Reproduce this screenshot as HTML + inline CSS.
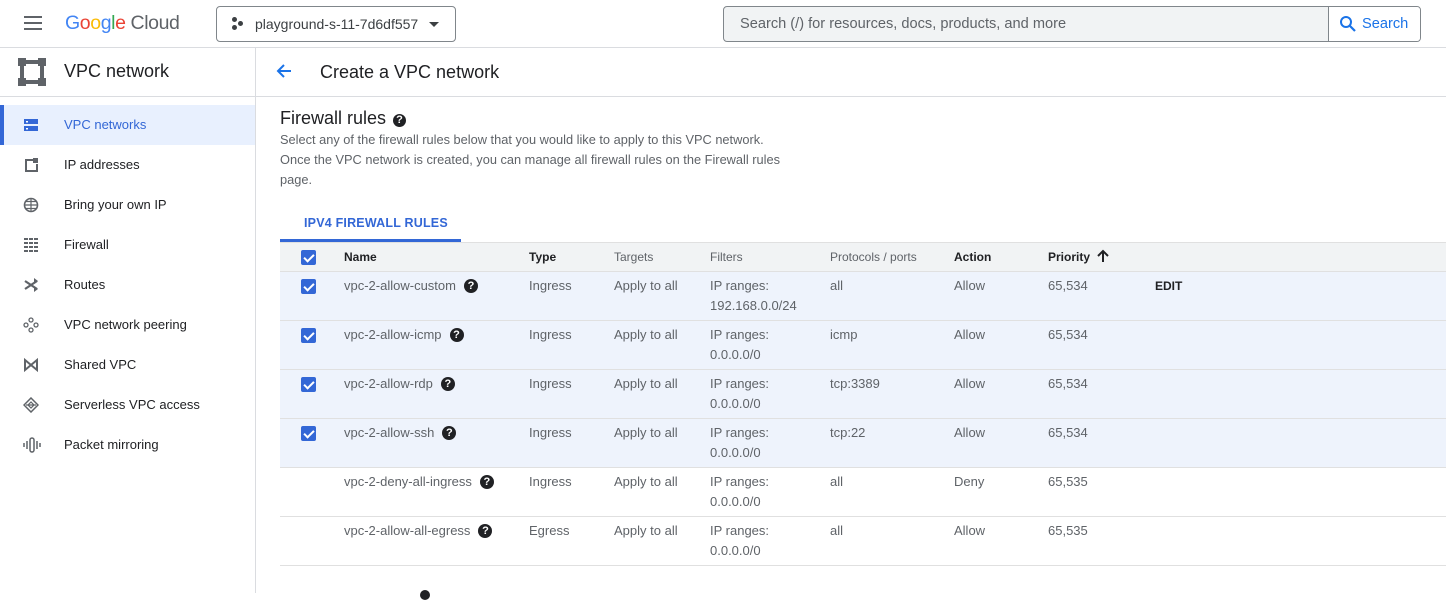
<!DOCTYPE html>
<html><head><meta charset="utf-8"><style>
*{box-sizing:border-box;margin:0;padding:0}
body{width:1446px;height:593px;overflow:hidden;background:#fff;font-family:"Liberation Sans",Arial,sans-serif;color:#202124;position:relative}
.a{position:absolute}
.hdr{left:0;top:0;width:1446px;height:48px;border-bottom:1px solid #dadce0}
.side{left:0;top:48px;width:256px;height:545px;border-right:1px solid #dadce0}
.nav{position:absolute;left:0;width:255px;height:40px;font-size:13px;color:#202124}
.nav span{position:absolute;left:64px;top:12px}
.nav svg{position:absolute;left:23px;top:12px}
.cb{position:absolute;width:15px;height:15px;background:#3367d6;border-radius:2px}
.cb:after{content:"";position:absolute;left:5px;top:2px;width:4px;height:8px;border:solid #fff;border-width:0 2px 2px 0;transform:rotate(45deg)}
.row{position:absolute;left:280px;width:1166px;height:49px;border-bottom:1px solid #e0e0e0;font-size:13px;color:#5f6368}
.row.sel{background:#eef3fc}
.row div{position:absolute;top:4px;line-height:20px}
.row .cb{top:7px}
.q{display:inline-block;width:14px;height:14px;border-radius:50%;background:#202124;color:#fff;font-size:11px;font-weight:bold;text-align:center;line-height:14px;margin-left:8px;vertical-align:1px}
</style></head><body>
<div class="a hdr">
 <div class="a" style="left:24px;top:16px;width:18px;height:2px;background:#5f6368;box-shadow:0 6px 0 #5f6368,0 12px 0 #5f6368"></div>
 <div class="a" style="left:65px;top:12px;font-size:19.5px;letter-spacing:-0.4px"><span style="color:#4285f4">G</span><span style="color:#ea4335">o</span><span style="color:#fbbc05">o</span><span style="color:#4285f4">g</span><span style="color:#34a853">l</span><span style="color:#ea4335">e</span><span style="color:#5f6368"> Cloud</span></div>
 <div class="a" style="left:216px;top:6px;width:240px;height:36px;border:1px solid #80868b;border-radius:4px">
  <div class="a" style="left:15px;top:10px;width:5px;height:5px;border-radius:50%;background:#3c4043"></div>
  <div class="a" style="left:21px;top:14px;width:5px;height:5px;border-radius:50%;background:#3c4043"></div>
  <div class="a" style="left:15px;top:18px;width:5px;height:5px;border-radius:50%;background:#3c4043"></div>
  <div class="a" style="left:38px;top:9px;font-size:14px;color:#3c4043">playground-s-11-7d6df557</div>
  <div class="a" style="left:212px;top:15px;border:5px solid transparent;border-top:5px solid #3c4043"></div>
 </div>
 <div class="a" style="left:723px;top:6px;width:698px;height:36px;border:1px solid #80868b;border-radius:4px;background:#f1f3f4;overflow:hidden">
  <div class="a" style="left:16px;top:9px;font-size:14.6px;color:#5f6368">Search (/) for resources, docs, products, and more</div>
  <div class="a" style="left:604px;top:0;width:94px;height:36px;background:#fff;border-left:1px solid #80868b">
   <svg class="a" style="left:10px;top:8px" width="18" height="18" viewBox="0 0 18 18"><circle cx="7" cy="7" r="5" fill="none" stroke="#1a73e8" stroke-width="2"/><path d="M11 11l5 5" stroke="#1a73e8" stroke-width="2.2"/></svg>
   <div class="a" style="left:33px;top:9px;font-size:14.6px;color:#1a73e8">Search</div>
  </div>
 </div>
</div>
<div class="a side">
 <svg class="a" style="left:18px;top:10px" width="28" height="28" viewBox="0 0 28 28"><g fill="#5f6368"><rect x="0" y="0" width="8" height="8"/><rect x="20" y="0" width="8" height="8"/><rect x="0" y="20" width="8" height="8"/><rect x="20" y="20" width="8" height="8"/><rect x="2" y="8" width="4" height="12"/><rect x="22" y="8" width="4" height="12"/><rect x="8" y="2" width="12" height="4"/><rect x="8" y="22" width="12" height="4"/></g></svg>
 <div class="a" style="left:64px;top:13px;font-size:18px">VPC network</div>
 <div class="a" style="left:0;top:48px;width:255px;border-top:1px solid #dadce0"></div>
</div>
<div class="nav" style="top:105px;background:#e8f0fe;left:0"><div class="a" style="left:0;top:0;width:4px;height:40px;background:#3367d6"></div><svg width="16" height="16" viewBox="0 0 16 16"><rect x="1" y="2" width="14" height="5" fill="#3367d6"/><rect x="1" y="9" width="14" height="5" fill="#3367d6"/><rect x="3" y="4" width="2" height="1.5" fill="#fff"/><rect x="3" y="11" width="2" height="1.5" fill="#fff"/></svg><span style="color:#3367d6">VPC networks</span></div>
<div class="nav" style="top:145px"><svg width="16" height="16" viewBox="0 0 16 16"><path d="M10 3H3v11h11V7" fill="none" stroke="#5f6368" stroke-width="2"/><rect x="10" y="1" width="5" height="5" fill="#5f6368"/></svg><span>IP addresses</span></div>
<div class="nav" style="top:185px"><svg width="16" height="16" viewBox="0 0 16 16"><circle cx="8" cy="8" r="6.5" fill="none" stroke="#5f6368" stroke-width="1.6"/><path d="M1.5 8h13M8 1.5v13M3 4.5h10M3 11.5h10" stroke="#5f6368" stroke-width="1.2"/></svg><span>Bring your own IP</span></div>
<div class="nav" style="top:225px"><svg width="16" height="16" viewBox="0 0 16 16"><path d="M1 2h14M1 6h14M1 10h14M1 14h14" stroke="#5f6368" stroke-width="2" stroke-dasharray="4 1"/></svg><span>Firewall</span></div>
<div class="nav" style="top:265px"><svg width="16" height="16" viewBox="0 0 16 16"><path d="M2 4l12 8M2 12l12-8" stroke="#5f6368" stroke-width="2.2"/><path d="M11 1l4 3-4 3zM11 9l4 3-4 3z" fill="#5f6368"/></svg><span>Routes</span></div>
<div class="nav" style="top:305px"><svg width="16" height="16" viewBox="0 0 16 16"><g fill="none" stroke="#5f6368" stroke-width="1.3"><circle cx="8" cy="3" r="2"/><circle cx="3" cy="8" r="2"/><circle cx="13" cy="8" r="2"/><circle cx="8" cy="13" r="2"/></g></svg><span>VPC network peering</span></div>
<div class="nav" style="top:345px"><svg width="16" height="16" viewBox="0 0 16 16"><path d="M2 3v10l6-5zM14 3v10l-6-5z" fill="none" stroke="#5f6368" stroke-width="2"/></svg><span>Shared VPC</span></div>
<div class="nav" style="top:385px"><svg width="16" height="16" viewBox="0 0 16 16"><path d="M8 1l7 7-7 7-7-7z" fill="none" stroke="#5f6368" stroke-width="1.5"/><path d="M3 8h10M8 5l-3 3 3 3 3-3z" fill="none" stroke="#5f6368" stroke-width="1.2"/></svg><span>Serverless VPC access</span></div>
<div class="nav" style="top:425px"><svg width="18" height="16" viewBox="0 0 18 16"><path d="M1 6v4M4 4v8M14 4v8M17 6v4" stroke="#5f6368" stroke-width="1.5"/><rect x="7" y="1" width="4" height="14" rx="2" fill="none" stroke="#5f6368" stroke-width="1.5"/></svg><span>Packet mirroring</span></div>

<div class="a" style="left:256px;top:96px;width:1190px;border-top:1px solid #dadce0"></div>
<svg class="a" style="left:275px;top:62px" width="18" height="18" viewBox="0 0 18 18"><path d="M16 9H3M9 3L3 9l6 6" fill="none" stroke="#1a73e8" stroke-width="2"/></svg>
<div class="a" style="left:320px;top:62px;font-size:18px">Create a VPC network</div>

<div class="a" style="left:280px;top:108px;font-size:18px">Firewall rules <span class="q" style="margin-left:2px;width:13px;height:13px;line-height:13px">?</span></div>
<div class="a" style="left:280px;top:130px;font-size:12.8px;color:#5f6368;line-height:20px;width:540px">Select any of the firewall rules below that you would like to apply to this VPC network.<br>Once the VPC network is created, you can manage all firewall rules on the Firewall rules<br>page.</div>

<div class="a" style="left:304px;top:216px;font-size:12.5px;color:#3367d6;font-weight:bold;letter-spacing:0.2px">IPV4 FIREWALL RULES</div>
<div class="a" style="left:280px;top:239px;width:181px;height:3px;background:#3367d6"></div>
<div class="a" style="left:280px;top:242px;width:1166px;height:30px;background:#f1f3f4;border-top:1px solid #e0e0e0;border-bottom:1px solid #e0e0e0;font-size:12px;font-weight:bold">
 <div class="cb" style="left:21px;top:7px"></div>
 <div class="a" style="left:64px;top:7px">Name</div><div class="a" style="left:249px;top:7px">Type</div>
 <div class="a" style="left:334px;top:7px;color:#5f6368;font-weight:normal">Targets</div><div class="a" style="left:430px;top:7px;color:#5f6368;font-weight:normal">Filters</div>
 <div class="a" style="left:550px;top:7px;color:#5f6368;font-weight:normal">Protocols / ports</div><div class="a" style="left:674px;top:7px">Action</div><div class="a" style="left:768px;top:7px">Priority</div>
 <svg class="a" style="left:816px;top:6px" width="14" height="14" viewBox="0 0 14 14"><path d="M7 13V2M2 7l5-5 5 5" fill="none" stroke="#202124" stroke-width="2"/></svg>
</div>

<div class="row sel" style="top:272px"><div class="cb" style="left:21px"></div><div style="left:64px">vpc-2-allow-custom<span class="q">?</span></div><div style="left:249px">Ingress</div><div style="left:334px">Apply to all</div><div style="left:430px">IP ranges:<br>192.168.0.0/24</div><div style="left:550px">all</div><div style="left:674px">Allow</div><div style="left:768px">65,534</div><div style="left:875px;color:#202124;font-weight:bold;font-size:12px">EDIT</div></div>
<div class="row sel" style="top:321px"><div class="cb" style="left:21px"></div><div style="left:64px">vpc-2-allow-icmp<span class="q">?</span></div><div style="left:249px">Ingress</div><div style="left:334px">Apply to all</div><div style="left:430px">IP ranges:<br>0.0.0.0/0</div><div style="left:550px">icmp</div><div style="left:674px">Allow</div><div style="left:768px">65,534</div></div>
<div class="row sel" style="top:370px"><div class="cb" style="left:21px"></div><div style="left:64px">vpc-2-allow-rdp<span class="q">?</span></div><div style="left:249px">Ingress</div><div style="left:334px">Apply to all</div><div style="left:430px">IP ranges:<br>0.0.0.0/0</div><div style="left:550px">tcp:3389</div><div style="left:674px">Allow</div><div style="left:768px">65,534</div></div>
<div class="row sel" style="top:419px"><div class="cb" style="left:21px"></div><div style="left:64px">vpc-2-allow-ssh<span class="q">?</span></div><div style="left:249px">Ingress</div><div style="left:334px">Apply to all</div><div style="left:430px">IP ranges:<br>0.0.0.0/0</div><div style="left:550px">tcp:22</div><div style="left:674px">Allow</div><div style="left:768px">65,534</div></div>
<div class="row" style="top:468px"><div style="left:64px">vpc-2-deny-all-ingress<span class="q">?</span></div><div style="left:249px">Ingress</div><div style="left:334px">Apply to all</div><div style="left:430px">IP ranges:<br>0.0.0.0/0</div><div style="left:550px">all</div><div style="left:674px">Deny</div><div style="left:768px">65,535</div></div>
<div class="row" style="top:517px"><div style="left:64px">vpc-2-allow-all-egress<span class="q">?</span></div><div style="left:249px">Egress</div><div style="left:334px">Apply to all</div><div style="left:430px">IP ranges:<br>0.0.0.0/0</div><div style="left:550px">all</div><div style="left:674px">Allow</div><div style="left:768px">65,535</div></div>
<div class="a" style="left:420px;top:590px;width:10px;height:10px;border-radius:50%;background:#202124"></div>
</body></html>
